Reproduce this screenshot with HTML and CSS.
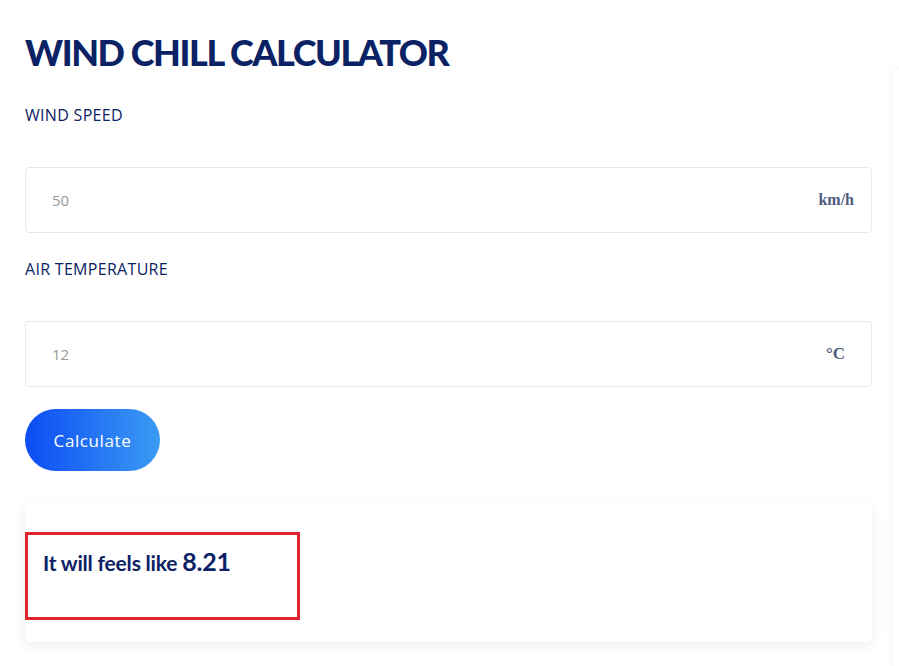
FILE: index.html
```html
<!DOCTYPE html>
<html lang="en">
  <head>
    <meta charset="UTF-8" />
    <meta name="viewport" content="width=device-width, initial-scale=1.0" />
    <title>Wind Chill Calculator</title>
    <link rel="stylesheet" href="styles.css">
  </head>
  <body>
    <div class="page">
      <main class="calculator">
        <h1>WIND CHILL CALCULATOR</h1>

        <label class="field-label" for="windSpeed">WIND SPEED</label>
        <div class="field">
          <input type="text" id="windSpeed" placeholder="50" />
          <span class="unit">km/h</span>
        </div>

        <label class="field-label" for="airTemp">AIR TEMPERATURE</label>
        <div class="field">
          <input type="text" id="airTemp" placeholder="12" />
          <span class="unit unit-temp">°C</span>
        </div>

        <button id="calcBtn" class="calc-btn">Calculate</button>

        <div class="result-card">
          <div class="result-box">
            It will feels like <span id="resultValue" class="result-value">8.21</span>
          </div>
        </div>
      </main>
      <aside class="side"></aside>
    </div>
  </body>
</html>
```

FILE: styles.css
```css
body {
  margin: 0;
  background-color: #fff;
  font-family: "Open Sans", "Liberation Sans", sans-serif;
  color: #0b2265;
}

.page {
  display: flex;
  gap: 21px;
  padding-left: 25px;
  min-height: 666px;
  overflow: hidden;
}

.calculator {
  flex: 0 0 847px;
  padding-top: 30px;
}

.calculator h1 {
  margin: 0 0 31px;
  font-family: Lato, sans-serif;
  font-weight: 900;
  font-size: 36px;
  line-height: 44px;
  color: #0b2265;
  letter-spacing: -1.4px;
}

.field-label {
  display: block;
  font-size: 16px;
  font-weight: 500;
  line-height: 20px;
  letter-spacing: 0.3px;
  margin-bottom: 42px;
  color: #0b2265;
}

.field {
  display: flex;
  align-items: center;
  height: 64px;
  border: 1px solid #e8e8e8;
  border-radius: 4px;
  padding: 0 17px 0 24px;
  margin-bottom: 26px;
}

.field input {
  flex: 1;
  border: none;
  outline: none;
  font-family: inherit;
  font-size: 15px;
  color: #333;
  background: transparent;
}

.field input::placeholder {
  color: #9a9a9a;
}

.unit {
  font-family: "Liberation Serif", serif;
  font-weight: bold;
  font-size: 16px;
  color: #4f5a80;
}

.unit-temp {
  margin-right: 9px;
  font-size: 17px;
}

.calc-btn {
  display: block;
  width: 135px;
  height: 62px;
  margin-top: -4px;
  border: none;
  border-radius: 31px;
  background: linear-gradient(90deg, #0c4cf4, #3b9bf4);
  color: white;
  font-family: inherit;
  font-size: 17px;
  font-weight: 500;
  letter-spacing: 0.6px;
  cursor: pointer;
}

.result-card {
  margin-top: 30px;
  padding: 31px 0 22px;
  background: white;
  border-radius: 6px;
  box-shadow: 0 4px 14px rgba(0, 0, 0, 0.07);
}

.result-box {
  width: 254px;
  height: 82px;
  border: 3px solid #e0232c;
  padding-left: 15px;
  font-family: Lato, sans-serif;
  font-weight: bold;
  font-size: 21px;
  line-height: 52px;
  letter-spacing: -0.2px;
  color: #0b2265;
}

.result-value {
  font-size: 25px;
}

.side {
  flex: 0 0 300px;
  margin-top: 70px;
  background: white;
  box-shadow: 0 0 10px rgba(0, 0, 0, 0.06);
}
```
